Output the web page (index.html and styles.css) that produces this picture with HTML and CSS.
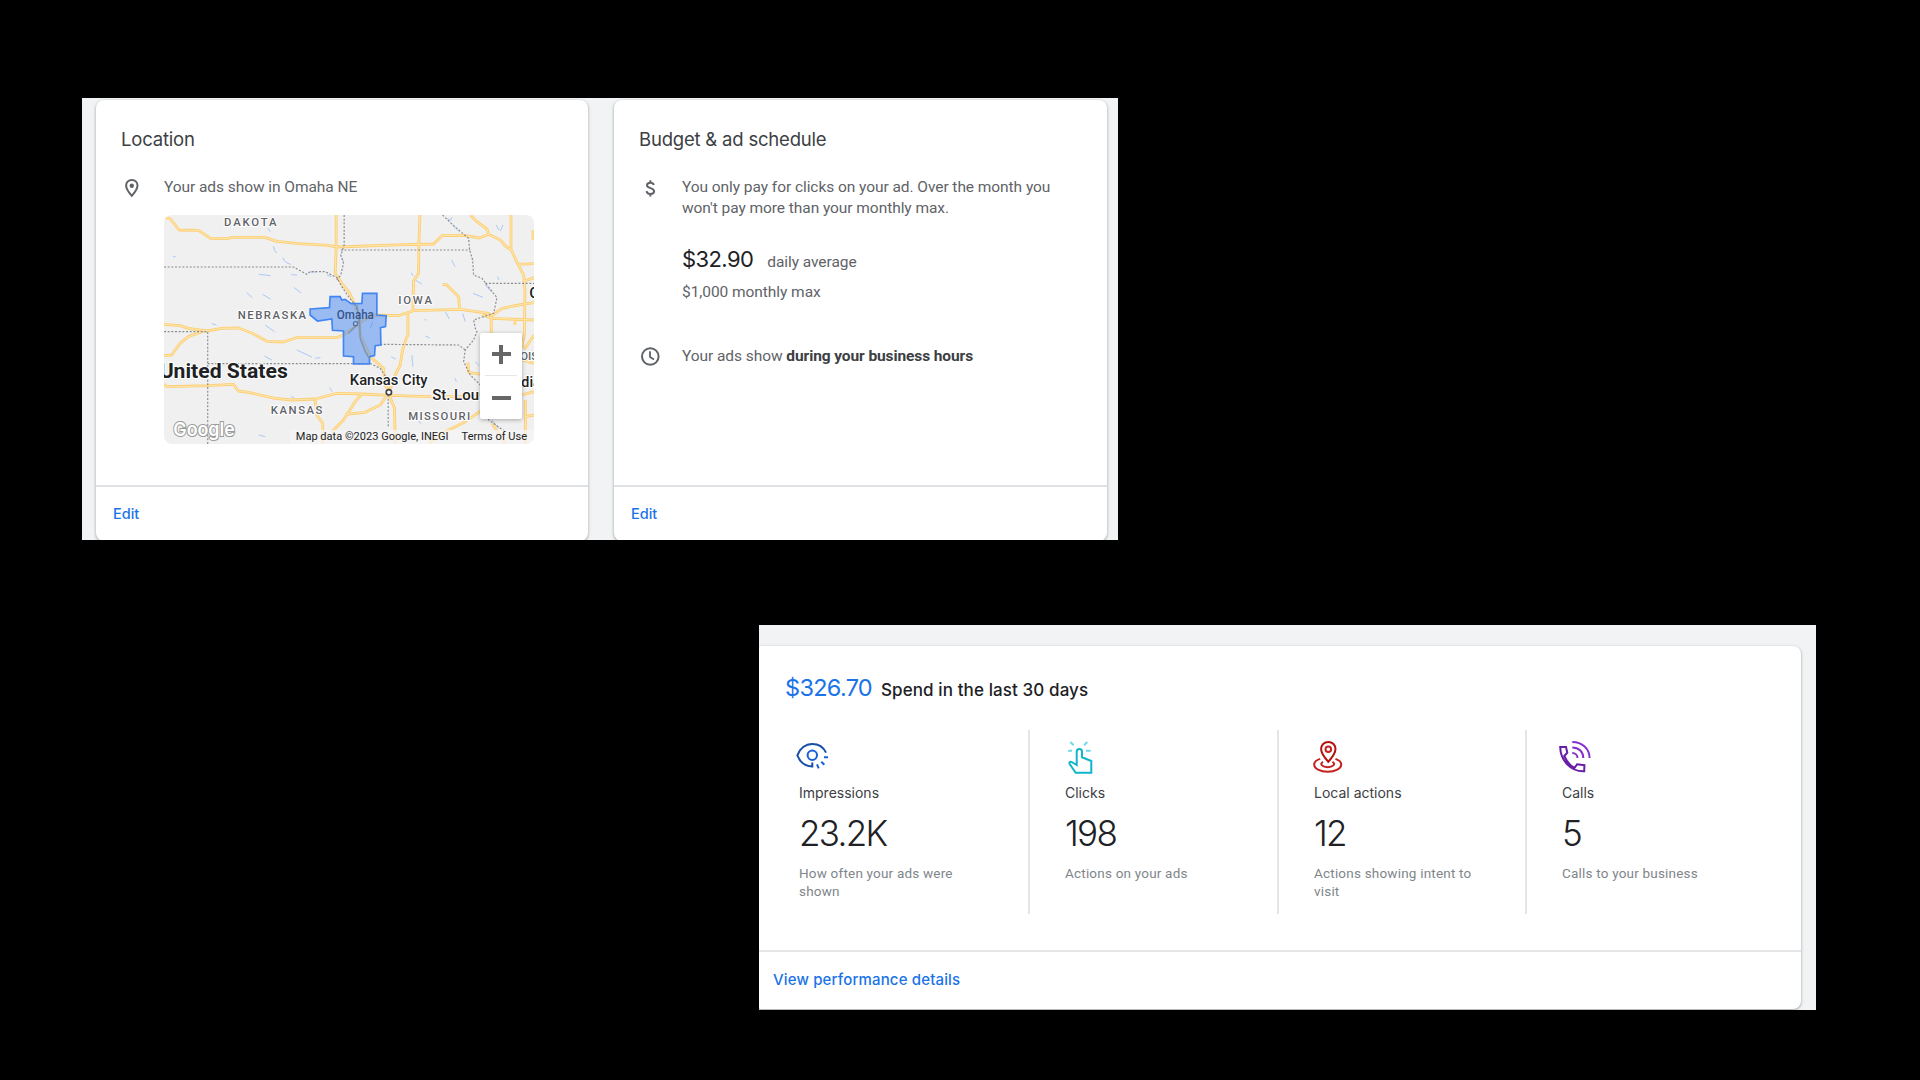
FILE: index.html
```html
<!DOCTYPE html>
<html lang="en">
<head>
<meta charset="utf-8">
<title>Ads overview</title>
<link rel="stylesheet" href="styles.css">
</head>
<body>
<section class="panel setup">
  <article class="card">
    <div class="card-body">
      <h2 class="card-title t-location">Location</h2>
      <div class="row">
        <svg class="row-icon" viewBox="0 0 24 24"><path fill="none" stroke="#5f6368" stroke-width="2" d="M9.800 3C6.200 3 4.100 5.500 4.100 8.500c0 4 5.700 10.300 5.700 10.300s5.700-6.300 5.700-10.300c0-3-2.100-5.500-5.700-5.500z"/><circle cx="9.800" cy="8.700" r="2.200" fill="#5f6368"/></svg>
        <p class="text">Your ads show in Omaha NE</p>
      </div>
      <div class="map">
        <svg class="map-art" viewBox="27 30 1109 687" preserveAspectRatio="none">
          <g class="water">
            <path d="M54 155h8M338 70l8 10M355 124q2 14 10 20M383 158q6 16 24 20M312 208l34 4M408 209l18 1M275 263l17 15M322 268l24 14M416 247l22 17M170 356l14 4M328 453l22 12M425 435l45 21M480 460l16-2M523 548l8 12M408 575l10 4M312 690l18 5M465 201h20M515 210l15 5M330 360l28 20M875 40l10 6 6-10M892 60l18 18M1023 60l8 15M1035 78l8-18M889 165l10 20M768 203l6 10M780 225l20 12M950 158l4 8M1027 215l3 10M953 265l30 12M990 240l20 22M870 320l12 22M922 325l8 25M808 344l6 1M645 370l8-20M810 393l14 6M770 450l3 35M708 455l14 8M900 520l3 10M740 520l7 20M790 646l6 10M960 470l12 12M1010 645l20 25M560 160l6 10"/>
          </g>
          <g class="road-edge">
            <path id="r" d="M27 38 L45 40 L72 75 L130 76 L168 101 L220 101 L230 97 L330 97 L365 109 L430 116 L520 121 L545 126 L750 119 L835 117 L862 91 L930 92 L973 99 L1000 88
            M945 30 L965 50 L995 72 L1000 88 L1035 105 L1052 125 L1067 133
            M1067 30 V133 L1088 178 L1105 210 L1109 260 L1107 390 L1100 420 L1110 430 L1136 390
            M1088 178 L1136 176 M1108 228 L1136 218 M1133 75 V105
            M543 30 V126 L540 205 L560 235 L582 262 L597 295 L612 340 L615 390 L645 455 L685 490 L690 540 L701 560
            M794 30 L791 118 L790 205 L775 228 L773 318
            M758 322 V390 L753 400 L742 435 L735 480 L720 510 L701 562
            M862 238 L875 240 L910 275 L913 312
            M620 350 L650 330 L730 332 L760 322 L775 317 L915 313 L1000 325 L1010 332 L1040 310 L1090 300 L1136 293
            M980 328 L1010 340 L1136 345 M1080 345 L1078 360 M1008 335 V390
            M27 358 L75 362 L100 370 L155 378 L200 370 L250 369 L290 384 L335 409 L385 411 L425 398 L545 398 L565 390 L600 365 L620 350
            M27 452 L50 450 L75 415 L100 395 L155 375
            M27 538 L35 545 L158 542 L235 538 L250 558 L280 562 L360 580 L410 585 L480 582 L545 565 L620 567 L701 571 L820 575 L960 574 L990 560
            M480 585 L485 630 L503 655 V717
            M530 680 L565 645 L600 590 L620 567 M570 628 L630 622 L675 600 L695 572
            M701 567 L718 610 L720 717
            M820 717 L870 680 L930 650 L970 622 L1010 590
            M980 508 L940 502 L938 472
            M1010 655 L1050 717 M1098 570 L1136 560 M1110 585 V717 M1110 635 L1136 630 M1100 465 L1136 475"/>
          </g>
          <g class="road-core">
            <use href="#r"/>
          </g>
          <path class="border" d="M27 186 H415 L455 208 L465 200 H510 L545 218 L560 245 L580 275 L600 300 L615 340
            M567 30 V120 L557 150 L565 175 L557 210 L545 225 M557 135 H945
            M862 30 L895 62 L940 100 L943 135 L952 165 L955 210 L980 220 L995 240 L1025 278 L1015 325 L955 345 L960 370 L965 380 L955 405 L930 435 L925 470 L945 510 L980 545 L1000 645 L1050 680
            M990 235 H1136 M27 380 H158 V717 M158 476 H640 M675 418 L910 420 L930 435 M645 475 L675 490 L698 525 M699 570 V665"/>
          <path class="area" d="M465 312 L523 308 L525 275 H555 L560 285 L570 283 L588 296 L620 295 L622 265 H665 V330 L693 332 L691 365 L676 368 L677 420 L660 422 L658 452 L643 455 V477 H595 V455 L565 453 V378 L532 376 L530 342 L487 348 L465 330z"/>
          <path class="area-road" d="M580 385 L605 360 L613 340 M605 300 L613 340 L615 400 L630 440 L643 462"/>
          <circle cx="601" cy="356" r="6" fill="#b8cdf3" stroke="#55709f" stroke-width="4"/>
          <circle cx="701" cy="562" r="8" fill="#fff" stroke="#444" stroke-width="5"/>
          <g class="state">
            <text x="207" y="63" textLength="157">DAKOTA</text>
            <text x="248" y="343" textLength="205">NEBRASKA</text>
            <text x="729" y="296" textLength="101">IOWA</text>
            <text x="347" y="627" textLength="155">KANSAS</text>
            <text x="759" y="646" textLength="186">MISSOURI</text>
            <text x="1095" y="466">OIS</text>
          </g>
          <g class="city">
            <text x="545" y="341" textLength="111" lengthAdjust="spacingAndGlyphs" class="omaha">Omaha</text>
            <text x="584" y="541" textLength="233" lengthAdjust="spacingAndGlyphs">Kansas City</text>
            <text x="831" y="586" textLength="140" lengthAdjust="spacingAndGlyphs">St. Lou</text>
            <text x="1098" y="546">dia</text>
            <text x="1122" y="279" class="big">C</text>
            <text x="14" y="519" textLength="384" lengthAdjust="spacingAndGlyphs" class="country">United States</text>
          </g>
          <text x="55" y="692" textLength="184" lengthAdjust="spacingAndGlyphs" class="logo">Google</text>
          <rect x="405" y="675" width="731" height="42" fill="#f5f5f5" opacity=".72"/>
          <g class="credit">
            <text x="422" y="706" textLength="458" lengthAdjust="spacingAndGlyphs">Map data ©2023 Google, INEGI</text>
            <text x="919" y="706" textLength="196" lengthAdjust="spacingAndGlyphs">Terms of Use</text>
          </g>
        </svg>
        <div class="zoom"><span class="zoom-in"></span><span class="zoom-out"></span></div>
      </div>
    </div>
    <footer class="card-foot"><a class="link">Edit</a></footer>
  </article>
  <article class="card">
    <div class="card-body">
      <h2 class="card-title">Budget &amp; ad schedule</h2>
      <div class="row">
        <svg class="row-icon" viewBox="0 0 24 24"><path fill="none" stroke="#5f6368" stroke-width="2" d="M13.700 8C13.400 6.500 12 5.700 10.300 5.700 8.500 5.700 7 6.500 7 8.200c0 1.700 1.600 2.300 3.500 2.900s3.600 1.200 3.600 3.100c0 1.800-1.700 2.700-3.700 2.700-2.100 0-3.600-.900-3.800-2.800M10.400 3.200v2.500M10.400 16.900v2.500"/></svg>
        <p class="text">You only pay for clicks on your ad. Over the month you<br>won't pay more than your monthly max.</p>
      </div>
      <div class="budget"><span class="amount">$32.90</span><span class="text">daily average</span></div>
      <p class="text monthly">$1,000 monthly max</p>
      <div class="row hours">
        <svg class="row-icon" viewBox="0 0 24 24"><circle cx="10.300" cy="10.500" r="8.300" fill="none" stroke="#5f6368" stroke-width="2"/><path fill="none" stroke="#5f6368" stroke-width="1.800" d="M10 5.300v5.600l4 2.600"/></svg>
        <p class="text">Your ads show <b>during your business hours</b></p>
      </div>
    </div>
    <footer class="card-foot"><a class="link">Edit</a></footer>
  </article>
</section>

<section class="panel report">
  <article class="card spend">
    <div class="spend-body">
      <header class="spend-head"><span class="total">$326.70</span><span class="period">Spend in the last 30 days</span></header>
      <div class="metrics">
        <div class="metric">
          <svg class="metric-icon eye" viewBox="0 0 36 34"><g fill="none" stroke-width="2"><path stroke="#174ea6" d="M30 12.700C27.500 7.300 22.300 4 16.300 4 9.500 4 3.900 8.600 1.400 15.300c2.500 6.500 8 11 14.900 11.200v-4"/><g stroke="#1a5fd6"><circle cx="16.300" cy="15.300" r="4.700"/><path d="M28 17.300h4M25.300 21.700l3 3M21 24.300l1.700 4"/></g></g></svg>
          <p class="label">Impressions</p>
          <p class="value">23.2K</p>
          <p class="desc">How often your ads were<br>shown</p>
        </div>
        <div class="metric">
          <svg class="metric-icon hand" viewBox="0 0 36 34"><g fill="none" stroke-width="2"><path stroke="#12b5cb" d="M11.700 25V11.700c0-3.600 5.300-3.600 5.300 0v5.600l9.300 3.700v11.700H10.700l-6.200-9c-.6-1.400 1-2.400 2.200-1.700z"/><path stroke="#6fd9e8" d="M3 10.700h4M5.300 2l3.400 3.200M22.300 2L19 5.200M21 10.700h4.700"/></g></svg>
          <p class="label">Clicks</p>
          <p class="value">198</p>
          <p class="desc">Actions on your ads</p>
        </div>
        <div class="metric">
          <svg class="metric-icon pin" viewBox="0 0 36 34"><g fill="none" stroke-width="2"><path stroke="#b31412" d="M16.300 1.900c-4.200 0-7.200 3.100-7.200 7.100 0 4.900 7.200 12.700 7.200 12.700s7.200-7.800 7.200-12.700c0-4-3-7.100-7.200-7.100z"/><g stroke="#c5221f"><circle cx="16.300" cy="9.200" r="2.800"/><path d="M8.200 18.900C4.500 20.100 2.200 22 2.200 24.400c0 4.200 6 7.400 13.500 7.400s13.500-3.200 13.500-7.400c0-2.400-2.300-4.300-5.700-5.500M11 21.900c-4 2.300-.4 5.300 4.700 5.300s8.700-3 4.700-5.300"/></g></g></svg>
          <p class="label">Local actions</p>
          <p class="value">12</p>
          <p class="desc">Actions showing intent to<br>visit</p>
        </div>
        <div class="metric">
          <svg class="metric-icon phone" viewBox="0 0 36 34"><g fill="none" stroke-width="2"><path stroke="#681da8" d="M3.200 7h5.800l1.300 5.700-3 3.300c2.300 5.300 5.400 9.500 10.200 12l2.600-3.700 7.300.9-.2 6C13.500 31.700 3.500 20.500 3.200 7z"/><path stroke="#8430ce" d="M15.300 1.900c9.800 0 17.300 6.800 17.300 16.100M15.300 7.400c6.200 0 11 4.300 11 10.600M15.300 13c3 0 5.200 2 5.200 5"/></g></svg>
          <p class="label">Calls</p>
          <p class="value">5</p>
          <p class="desc">Calls to your business</p>
        </div>
      </div>
    </div>
    <footer class="spend-foot"><a class="link view">View performance details</a></footer>
  </article>
</section>
</body>
</html>
```
FILE: styles.css
```css
* { box-sizing: border-box; margin: 0; padding: 0; }
body { width: 1920px; height: 1080px; background: #000; overflow: hidden; display: flow-root; font-family: Roboto, sans-serif; color: #5f6368; }
.panel { background: #f1f3f4; overflow: hidden; }
.setup { width: 1036px; height: 442px; margin: 98px 0 0 82px; padding: 2px 11px 0 14px; display: grid; grid-template-columns: 492px 493px; justify-content: space-between; }
.card { background: #fff; border-radius: 8px; box-shadow: 0 1px 2px rgba(60,64,67,.3), 0 1px 3px 1px rgba(60,64,67,.15); }
.setup .card { height: 441px; }
.card-body { height: 387px; padding: 27px 26px 0; border-bottom: 2px solid #dfe1e4; }
.card-title { font: 400 18.500px/24px Inter, sans-serif; letter-spacing: -.2px; color: #3c4043; white-space: nowrap; margin: 0 0 26px -1px; }
.row { display: flex; }
.row-icon { width: 24px; height: 24px; margin-right: 18px; flex: none; }
.text { font-size: 15.500px; line-height: 21px; letter-spacing: -.06px; white-space: nowrap; }
.text b { color: #3c4043; font-weight: 700; letter-spacing: -.1px; }
.map { position: relative; width: 370px; height: 229px; margin: 14px 0 0 42px; border-radius: 8px; overflow: hidden; background: #f0f0f0; }
.map-art { display: block; width: 370px; height: 229px; }
.map-art path, .map-art use { fill: none; }
.water { stroke: #9cbff8; stroke-width: 2.500; }
.road-edge { stroke: #fcce73; stroke-width: 8.500; stroke-linejoin: round; }
.road-core { stroke: #ffe7b0; stroke-width: 3; stroke-linejoin: round; }
.border { stroke: #8a8c90; stroke-width: 3.500; stroke-dasharray: 6 5; }
.map-art .area { fill: rgba(66,133,244,.5); stroke: #4285f4; stroke-width: 5; }
.area-road { stroke: #7d92b5; stroke-width: 4; }
.state { font: 500 34px Roboto, sans-serif; fill: #5f6368; stroke: #fff; stroke-width: 6; paint-order: stroke; }
.city { font: 500 43px Roboto, sans-serif; fill: #202124; stroke: #fff; stroke-width: 6; paint-order: stroke; }
.city .omaha { font-size: 36px; fill: #35548c; stroke: none; }
.city .country { font-size: 62px; font-weight: 700; }
.city .big { font-size: 46px; }
.logo { font: 600 58px Inter, sans-serif; fill: #fff; stroke: #999; stroke-width: 6; paint-order: stroke; }
.credit { font: 400 31px Roboto, sans-serif; fill: #222; }
.zoom { position: absolute; left: 316px; top: 118px; width: 42px; height: 86px; background: #fff; border-radius: 2px; box-shadow: 0 1px 4px rgba(0,0,0,.3); }
.zoom span { display: block; height: 43px; background: linear-gradient(#666, #666) center / 19px 4px no-repeat; }
.zoom .zoom-in { background: linear-gradient(#666, #666) center 19px / 19px 4px no-repeat, linear-gradient(#666, #666) center 12px / 4px 19px no-repeat, linear-gradient(#e6e6e6, #e6e6e6) center bottom / 32px 1px no-repeat; }
.link { font: 500 14.500px/20px Inter, sans-serif; color: #1a73e8; white-space: nowrap; }
.card-foot { padding: 17px 17px; display: flex; }
.budget { display: flex; align-items: baseline; margin: 26px 0 9px 42px; height: 28px; }
.amount { font: 400 22px/28px Inter, sans-serif; letter-spacing: -.6px; color: #202124; margin-right: 14px; }
.monthly { margin-left: 42px; }
.hours { margin-top: 43px; }

.report { width: 1057px; height: 385px; margin: 85px 0 0 759px; padding-top: 21px; }
.spend { width: 1042px; height: 363px; border-radius: 2px 8px 8px 2px; }
.spend-body { padding: 27px 0 36px; border-bottom: 2px solid #e4e5e7; }
.spend-head { display: flex; align-items: baseline; height: 30px; padding-left: 26px; margin-bottom: 27px; white-space: nowrap; }
.total { font: 400 23.500px/30px Inter, sans-serif; letter-spacing: -.7px; color: #1a73e8; margin-right: 9px; }
.period { font: 500 17px/30px Inter, sans-serif; letter-spacing: .1px; color: #202124; }
.metrics { display: grid; grid-template-columns: 269px 249px 248px 1fr; height: 184px; }
.metric { padding: 10px 0 0 35px; border-left: 2px solid #e4e5e7; }
.metric:first-child { border-left: 0; padding-left: 40px; }
.metric-icon { display: block; width: 36px; height: 34px; }
.eye { margin-left: -3px; }
.hand { margin-left: 0; }
.pin { margin-left: -2px; }
.phone { margin-left: -5px; }
.label { font: 400 14px/20px Inter, sans-serif; color: #3c4043; margin-top: 9px; }
.value { font: 350 35px/40px Inter, sans-serif; letter-spacing: -1.700px; color: #202124; margin-top: 10px; }
.desc { font-size: 13.500px; line-height: 18px; letter-spacing: .2px; color: #80868b; margin-top: 11px; white-space: nowrap; }
.spend-foot { padding: 18px 14px; display: flex; }
.view { font-size: 15px; letter-spacing: .15px; }
```
